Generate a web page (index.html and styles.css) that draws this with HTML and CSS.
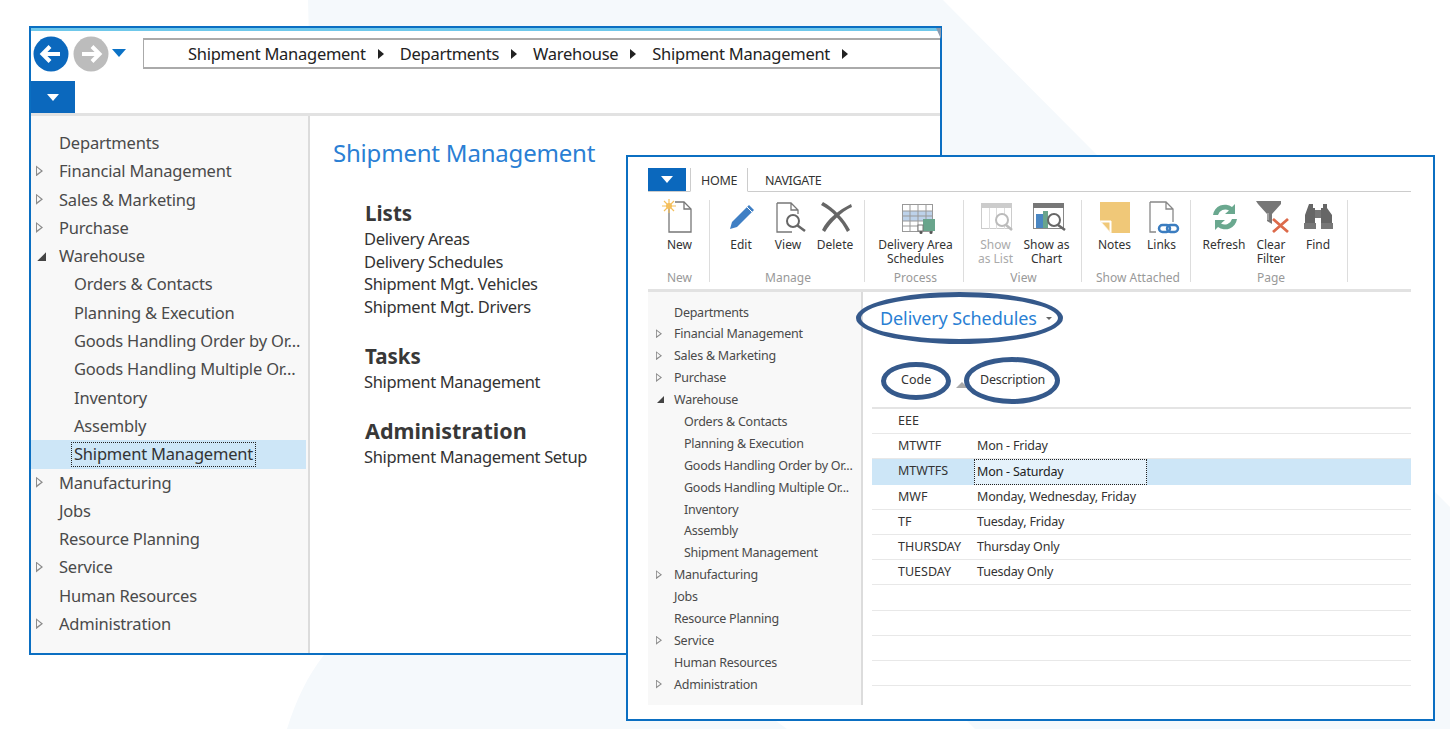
FILE: index.html

```html
<!DOCTYPE html>
<html lang="en">
  <head>
    <title>Shipment Management</title>
    <link rel="stylesheet" href="styles.css">
  </head>
  <body>
    <svg class="backdrop" width="1450" height="729" viewBox="0 0 1450 729">
      <path d="M308 0H943L1097 155V600L776 721L787 729H287C296 700 308 675 324 655Z" fill="#f5f9fc"/>
      <path d="M1430 487L1450 507V729H975L966 720V600Z" fill="#f5f9fc"/>
    </svg>

    <!-- Departments window -->
    <div class="window window-main">
      <div class="title-strip"><span class="corner"></span></div>
      <div class="nav-row">
        <svg class="nav-btn" width="36" height="36" viewBox="0 0 36 36">
          <circle cx="18" cy="18" r="17.5" fill="#0b68bd"/>
          <path d="M27 18H10M17 10.500L9.500 18L17 25.500" fill="none" stroke="#fff" stroke-width="4"/>
        </svg>
        <svg class="nav-btn" width="36" height="36" viewBox="0 0 36 36">
          <circle cx="18" cy="18" r="17.500" fill="#bcbcbc"/>
          <path d="M9 18H26M19 10.500L26.500 18L19 25.500" fill="none" stroke="#fff" stroke-width="4"/>
        </svg>
        <span class="nav-drop"></span>
        <div class="address">
          <span>Shipment Management</span><i></i>
          <span>Departments</span><i></i>
          <span>Warehouse</span><i></i>
          <span>Shipment Management</span><i></i>
        </div>
      </div>
      <div class="menu-row"><div class="menu-btn"><b></b></div></div>
      <div class="window-body">
        <ul class="tree tree-big">
          <li>Departments</li>
          <li class="closed">Financial Management</li>
          <li class="closed">Sales &amp; Marketing</li>
          <li class="closed">Purchase</li>
          <li class="open">Warehouse</li>
          <li class="child">Orders &amp; Contacts</li>
          <li class="child">Planning &amp; Execution</li>
          <li class="child">Goods Handling Order by Or...</li>
          <li class="child">Goods Handling Multiple Or...</li>
          <li class="child">Inventory</li>
          <li class="child">Assembly</li>
          <li class="child selected"><span>Shipment Management</span></li>
          <li class="closed">Manufacturing</li>
          <li>Jobs</li>
          <li>Resource Planning</li>
          <li class="closed">Service</li>
          <li>Human Resources</li>
          <li class="closed">Administration</li>
        </ul>
        <div class="main-content">
          <h1>Shipment Management</h1>
          <h2>Lists</h2>
          <p>Delivery Areas</p>
          <p>Delivery Schedules</p>
          <p>Shipment Mgt. Vehicles</p>
          <p>Shipment Mgt. Drivers</p>
          <h2 class="tasks">Tasks</h2>
          <p>Shipment Management</p>
          <h2 class="admin">Administration</h2>
          <p>Shipment Management Setup</p>
        </div>
      </div>
    </div>

    <!-- Delivery Schedules window -->
    <div class="window window-list">
      <div class="tabs">
        <div class="tab-menu"><b></b></div>
        <div class="tab active">HOME</div>
        <div class="tab">NAVIGATE</div>
      </div>

      <div class="ribbon">
        <div class="group g-new">
          <div class="items">
            <div class="item">
              <svg width="36" height="36" viewBox="0 0 36 36">
                <path d="M7 9V33H29V10L22 3H13" fill="#fff" stroke="#777" stroke-width="1.300"/>
                <path d="M22 3V10H29" fill="none" stroke="#777" stroke-width="1.300"/>
                <circle cx="7" cy="7" r="3" fill="#f4bf5c"/>
                <path d="M7 0V14M0 7H14M2 2L12 12M12 2L2 12" stroke="#f4bf5c" stroke-width="1.200"/>
              </svg>
              <span>New</span>
            </div>
          </div>
          <div class="group-name">New</div>
        </div>
        <div class="group g-manage">
          <div class="items">
            <div class="item">
              <svg width="36" height="36" viewBox="0 0 36 36">
                <path d="M7 30L9 23L26 6L31 11L14 28Z" fill="#3f7fc4"/>
                <path d="M24 8L29 13" stroke="#fff" stroke-width="1"/>
              </svg>
              <span>Edit</span>
            </div>
            <div class="item">
              <svg width="36" height="36" viewBox="0 0 36 36">
                <path d="M7 4H21L28 11V15M22 33H7V4M21 4V11H28" fill="none" stroke="#777" stroke-width="1.300"/>
                <circle cx="23" cy="22" r="6" fill="#fff" stroke="#666" stroke-width="2"/>
                <path d="M27.500 26.500L35 32" stroke="#666" stroke-width="2.500"/>
              </svg>
              <span>View</span>
            </div>
            <div class="item">
              <svg width="36" height="36" viewBox="0 0 36 36">
                <path d="M4 6C14 11 25 22 30 33L33 31C28 21 17 9 6 3Z" fill="#666"/>
                <path d="M34 5C22 11 10 20 5 31L8 33C14 23 24 13 35 8Z" fill="#666"/>
              </svg>
              <span>Delete</span>
            </div>
          </div>
          <div class="group-name">Manage</div>
        </div>
        <div class="group g-process">
          <div class="items">
            <div class="item item-wide">
              <svg width="36" height="36" viewBox="0 0 36 36">
                <rect x="4.500" y="5.500" width="30" height="27" fill="#fff" stroke="#999"/>
                <rect x="5" y="12" width="29" height="10" fill="#bdd2ea"/>
                <path d="M4 12H34M4 17H34M4 22H34M4 27H34M12 5V32M20 5V32M28 5V32" stroke="#999" stroke-width="1" fill="none"/>
                <rect x="25" y="20" width="12" height="12" fill="#69a58c"/>
                <rect x="20" y="26" width="5" height="6" fill="#fff" stroke="#777"/>
                <circle cx="23" cy="33.500" r="1.500" fill="#555"/>
                <circle cx="33" cy="33.500" r="1.500" fill="#555"/>
              </svg>
              <span>Delivery Area Schedules</span>
            </div>
          </div>
          <div class="group-name">Process</div>
        </div>
        <div class="group g-view">
          <div class="items">
            <div class="item disabled">
              <svg width="36" height="36" viewBox="0 0 36 36">
                <rect x="3.500" y="4.500" width="30" height="25" fill="#fff" stroke="#ccc"/>
                <rect x="3" y="4" width="31" height="5" fill="#ccc"/>
                <path d="M11.500 9V30M18.500 9V30M26.500 9V30" stroke="#ddd"/>
                <circle cx="24" cy="21" r="6" fill="#fff" stroke="#bbb" stroke-width="2"/>
                <path d="M28 26L34 31" stroke="#bbb" stroke-width="2.500"/>
              </svg>
              <span>Show as&nbsp;List</span>
            </div>
            <div class="item">
              <svg width="36" height="36" viewBox="0 0 36 36">
                <rect x="4.500" y="4.500" width="30" height="25" fill="#fff" stroke="#888"/>
                <rect x="4" y="4" width="31" height="5" fill="#777"/>
                <rect x="7" y="15" width="7" height="14" fill="#4a86c2"/>
                <rect x="14" y="12" width="5" height="17" fill="#69a58c"/>
                <circle cx="25" cy="21" r="6" fill="#fff" fill-opacity=".7" stroke="#666" stroke-width="2"/>
                <path d="M29 26L36 31" stroke="#666" stroke-width="2.500"/>
              </svg>
              <span>Show as Chart</span>
            </div>
          </div>
          <div class="group-name">View</div>
        </div>
        <div class="group g-attached">
          <div class="items">
            <div class="item">
              <svg width="36" height="36" viewBox="0 0 36 36">
                <path d="M3 3H33V34H14L3 22Z" fill="#f0c878"/>
                <path d="M3 22H14V34" fill="#fff" stroke="#fff" stroke-width="1"/>
                <path d="M5 23.500H12.500V32" fill="#f0c878"/>
              </svg>
              <span>Notes</span>
            </div>
            <div class="item">
              <svg width="36" height="36" viewBox="0 0 36 36">
                <path d="M6 3H22L29 10V23M12 33H6V3M22 3V10H29" fill="none" stroke="#888" stroke-width="1.300"/>
                <rect x="15" y="26" width="11" height="7" rx="3.500" fill="none" stroke="#3b7dc0" stroke-width="2.500"/>
                <rect x="23" y="26" width="11" height="7" rx="3.500" fill="none" stroke="#3b7dc0" stroke-width="2.500"/>
              </svg>
              <span>Links</span>
            </div>
          </div>
          <div class="group-name">Show Attached</div>
        </div>
        <div class="group g-page">
          <div class="items">
            <div class="item">
              <svg width="36" height="36" viewBox="0 0 36 36">
                <path d="M7 16A12 12 0 0 1 26 8L29 5V15H19L23 11.500A7.500 7.500 0 0 0 12 16Z" fill="#6aa88f"/>
                <path d="M31 20A12 12 0 0 1 12 28L9 31V21H19L15 24.500A7.500 7.500 0 0 0 26 20Z" fill="#6aa88f"/>
              </svg>
              <span>Refresh</span>
            </div>
            <div class="item">
              <svg width="36" height="36" viewBox="0 0 36 36">
                <path d="M3 2H28V5L19 15V25L14 22V15L5 5Z" fill="#777"/>
                <path d="M15 14V21" stroke="#ccc"/>
                <path d="M20 20L35 33M35 20L20 33" stroke="#dc6a4a" stroke-width="2.800"/>
              </svg>
              <span>Clear Filter</span>
            </div>
            <div class="item">
              <svg width="36" height="36" viewBox="0 0 36 36">
                <path d="M9 5H13V9H15V26H5V16ZM23 5H27V9L32 16V26H21V9H23Z" fill="#666"/>
                <rect x="15" y="11" width="6" height="8" fill="#777"/>
                <rect x="4" y="24" width="12" height="6" fill="#777"/>
                <rect x="21" y="24" width="12" height="6" fill="#777"/>
              </svg>
              <span>Find</span>
            </div>
          </div>
          <div class="group-name">Page</div>
        </div>
      </div>

      <div class="list-body">
        <ul class="tree tree-small">
          <li>Departments</li>
          <li class="closed">Financial Management</li>
          <li class="closed">Sales &amp; Marketing</li>
          <li class="closed">Purchase</li>
          <li class="open">Warehouse</li>
          <li class="child">Orders &amp; Contacts</li>
          <li class="child">Planning &amp; Execution</li>
          <li class="child">Goods Handling Order by Or...</li>
          <li class="child">Goods Handling Multiple Or...</li>
          <li class="child">Inventory</li>
          <li class="child">Assembly</li>
          <li class="child">Shipment Management</li>
          <li class="closed">Manufacturing</li>
          <li>Jobs</li>
          <li>Resource Planning</li>
          <li class="closed">Service</li>
          <li>Human Resources</li>
          <li class="closed">Administration</li>
        </ul>
        <div class="list-pane">
          <div class="list-title">Delivery Schedules <b></b></div>
          <div class="list-head">
            <span class="col-code">Code</span>
            <span class="col-desc">Description</span>
            <i class="sort"></i>
          </div>
          <div class="row"><span class="col-code">EEE</span><span class="col-desc"></span></div>
          <div class="row"><span class="col-code">MTWTF</span><span class="col-desc">Mon - Friday</span></div>
          <div class="row row-on"><span class="col-code">MTWTFS</span><span class="col-desc">Mon - Saturday</span></div>
          <div class="row"><span class="col-code">MWF</span><span class="col-desc">Monday, Wednesday, Friday</span></div>
          <div class="row"><span class="col-code">TF</span><span class="col-desc">Tuesday, Friday</span></div>
          <div class="row"><span class="col-code">THURSDAY</span><span class="col-desc">Thursday Only</span></div>
          <div class="row"><span class="col-code">TUESDAY</span><span class="col-desc">Tuesday Only</span></div>
          <div class="row"></div>
          <div class="row"></div>
          <div class="row"></div>
          <div class="row"></div>
        </div>
      </div>
    </div>

    <!-- hand drawn marks over the list -->
    <div class="oval oval-title"></div>
    <div class="oval oval-code"></div>
    <div class="oval oval-desc"></div>
  </body>
</html>
```

FILE: styles.css

```css
* {
  box-sizing: border-box;
}

body {
  margin: 0;
  width: 1450px;
  height: 729px;
  overflow: hidden;
  position: relative;
  background-color: #fff;
  font-family: "Noto Sans", "Open Sans", sans-serif;
  color: #444;
}

ul {
  list-style: none;
  margin: 0;
  padding: 0;
}

.backdrop {
  position: absolute;
  left: 0;
  top: 0;
}

.window {
  position: absolute;
  background-color: #fff;
  border: 2px solid #0b6fc2;
}

.window-main {
  left: 29px;
  top: 26px;
  width: 913px;
  height: 629px;
  display: flex;
  flex-direction: column;
}

.window-list {
  left: 626px;
  top: 155px;
  width: 809px;
  height: 566px;
  padding: 11px 22px 14px 20px;
  display: flex;
  flex-direction: column;
}

.title-strip {
  height: 3px;
  background-color: #6fc8ea;
  position: relative;
}

.corner {
  position: absolute;
  right: -1px;
  top: 0;
  width: 5px;
  height: 11px;
  background-color: #8a9bb0;
  clip-path: polygon(0 0, 100% 0, 100% 100%);
}

.nav-row {
  height: 50px;
  display: flex;
  align-items: center;
  padding: 0 0 4px 2px;
  gap: 4px;
}

.nav-btn {
  flex: none;
  margin-top: -1px;
}

.nav-drop {
  width: 0;
  height: 0;
  margin-left: -1px;
  border-left: 7px solid transparent;
  border-right: 7px solid transparent;
  border-top: 8px solid #0b72c6;
  margin-top: -3px;
}

.address {
  flex: 1;
  height: 31px;
  margin-left: 13px;
  margin-top: -1px;
  padding-left: 44px;
  display: flex;
  align-items: center;
  gap: 12px;
  border: 2px solid #aaa;
  border-right: 0;
  border-left-width: 1px;
  font-size: 16.500px;
  letter-spacing: -0.27px;
  color: #222;
}

.address i {
  width: 0;
  height: 0;
  border-top: 5px solid transparent;
  border-bottom: 5px solid transparent;
  border-left: 6px solid #222;
  margin-right: 4px;
}

.menu-row {
  height: 35px;
  border-bottom: 3px solid #e2e2e2;
  flex: none;
}

.menu-btn {
  width: 44px;
  height: 32px;
  background-color: #0b68bd;
  display: flex;
  align-items: center;
  justify-content: center;
}

.menu-btn b,
.tab-menu b {
  width: 0;
  height: 0;
  border-left: 6px solid transparent;
  border-right: 6px solid transparent;
  border-top: 7px solid #fff;
}

.window-body {
  flex: 1;
  display: flex;
  min-height: 0;
}

.tree {
  background-color: #f8f8f8;
  flex: none;
  color: #4a4a4a;
}

.tree li {
  position: relative;
  white-space: nowrap;
}

.tree .closed::before {
  content: "";
  position: absolute;
  top: 50%;
  width: 7px;
  height: 11px;
  margin-top: -6px;
  background-color: #8c8c8c;
  clip-path: polygon(0 0, 100% 50%, 0 100%, 0 82%, 72% 50%, 14% 18%, 14% 82%, 0 82%);
}

.tree .open::before {
  content: "";
  position: absolute;
  top: 50%;
  width: 9px;
  height: 9px;
  margin-top: -4px;
  background-color: #444;
  clip-path: polygon(100% 0, 100% 100%, 0 100%);
}

.tree-big {
  width: 279px;
  padding-top: 13px;
  border-right: 2px solid #dcdcdc;
  font-size: 16.500px;
  letter-spacing: -0.2px;
}

.tree-big li {
  height: 28.300px;
  line-height: 28px;
  padding-left: 28px;
}

.tree-big .closed::before {
  left: 5px;
}

.tree-big .open::before {
  left: 6px;
}

.tree-big .child {
  padding-left: 43px;
}

.tree-big .selected {
  background-color: #cde6f7;
  margin-right: 2px;
  color: #333;
}

.selected span {
  display: inline-block;
  height: 25px;
  line-height: 22px;
  margin-left: -3px;
  padding: 0 2px;
  border: 1px dotted #222;
  vertical-align: top;
  margin-top: 2px;
}

.main-content {
  flex: 1;
  padding: 16px 0 0 23px;
  color: #333;
}

.main-content h1 {
  margin: 0 0 26px;
  font-size: 24px;
  font-weight: 400;
  letter-spacing: -0.2px;
  line-height: 42px;
  color: #2a7fd4;
}

.main-content h2 {
  margin: 0 0 2px;
  padding-left: 32px;
  font-size: 20.500px;
  font-weight: 700;
  line-height: 26px;
  color: #383838;
}

.main-content p {
  margin: 0;
  padding-left: 31px;
  font-size: 16.500px;
  letter-spacing: -0.35px;
  line-height: 22.700px;
  white-space: nowrap;
}

.main-content .tasks {
  margin-top: 24px;
}

.main-content .admin {
  margin-top: 24px;
  font-size: 21.500px;
}

.tabs {
  height: 24px;
  display: flex;
  flex: none;
  font-size: 12px;
  color: #333;
  border-bottom: 1px solid #ccc;
}

.tab-menu {
  width: 38px;
  height: 23px;
  margin-right: 4px;
  background-color: #0b68bd;
  display: flex;
  align-items: center;
  justify-content: center;
}

.tab {
  padding: 0 10px;
  line-height: 26px;
  height: 24px;
  font-size: 12.500px;
  letter-spacing: -0.3px;
}

.tab.active {
  width: 58px;
  padding: 0 10px;
  border: 1px solid #ccc;
  border-top: 0;
  border-bottom: 1px solid #fff;
  margin-right: 7px;
}

.ribbon {
  height: 100px;
  flex: none;
  display: flex;
  border-bottom: 3px solid #e2e2e2;
  font-size: 12px;
  padding-top: 8px;
}

.group {
  display: flex;
  flex-direction: column;
  align-items: center;
  border-right: 1px solid #ddd;
  height: 82px;
  padding-left: 2px;
}

.g-new { width: 62px; }
.g-manage { width: 155px; }
.g-process { width: 99px; padding-left: 3px; }
.g-view { width: 118px; padding-left: 2px; }
.g-attached { width: 109px; padding-left: 4px; }
.g-page { width: 157px; padding-left: 4px; }

.items {
  height: 70px;
  flex: none;
  display: flex;
  justify-content: center;
}

.item {
  width: 47px;
  display: flex;
  flex-direction: column;
  align-items: center;
  text-align: center;
  line-height: 14px;
  color: #333;
}

.item svg {
  overflow: visible;
  flex: none;
  margin-top: -1px;
  margin-bottom: 3px;
}

.item-wide {
  width: 86px;
}

.g-view .items {
  margin-right: 5px;
}

.g-view .item {
  width: 51px;
}

.disabled {
  color: #aaa;
}

.group-name {
  font-size: 12px;
  line-height: 16px;
  color: #999;
}

.list-body {
  flex: 1;
  display: flex;
  min-height: 0;
}

.tree-small {
  width: 215px;
  padding-top: 9.500px;
  border-right: 2px solid #dcdcdc;
  font-size: 12.500px;
  letter-spacing: -0.25px;
}

.tree-small li {
  height: 21.900px;
  line-height: 22px;
  padding-left: 26px;
}

.tree-small .closed::before {
  left: 8px;
  width: 6px;
  height: 9px;
  margin-top: -5px;
}

.tree-small .open::before {
  left: 9px;
  width: 7px;
  height: 7px;
}

.tree-small .child {
  padding-left: 36px;
}

.list-pane {
  flex: 1;
  padding-left: 9px;
  color: #333;
  font-size: 12.500px;
}

.list-title {
  height: 50px;
  padding: 1px 0 0 8px;
  font-size: 18px;
  line-height: 30px;
  letter-spacing: -0.1px;
  color: #2a7fd4;
  display: flex;
  align-items: center;
}

.list-title b {
  width: 0;
  height: 0;
  margin: 2px 0 0 9px;
  border-left: 3px solid transparent;
  border-right: 3px solid transparent;
  border-top: 3px solid #666;
}

.list-head {
  height: 67px;
  display: flex;
  position: relative;
  padding-top: 28px;
  line-height: 20px;
  border-bottom: 2px solid #e4e4e4;
}

.sort {
  position: absolute;
  left: 84px;
  top: 40px;
  width: 0;
  height: 0;
  border-left: 6px solid transparent;
  border-right: 6px solid transparent;
  border-bottom: 6px solid #aaa;
}

.col-code {
  width: 102px;
  padding-left: 26px;
  flex: none;
}

.col-desc {
  width: 173px;
  padding-left: 3px;
  flex: none;
  letter-spacing: -0.2px;
}

.list-head .col-code {
  padding-left: 29px;
}

.list-head .col-desc {
  padding-left: 6px;
}

.row {
  height: 25.200px;
  line-height: 24px;
  display: flex;
  border-bottom: 1px solid #e8e8e8;
}

.row-on {
  background-color: #cde6f7;
  border-bottom: 0;
  line-height: 23px;
}

.row-on .col-desc {
  background-color: #e5f2fb;
  border: 1px dotted #222;
  padding-left: 2px;
  color: #222;
}

.oval {
  position: absolute;
  border: 5px solid #35598b;
  border-radius: 50%;
}

.oval-title {
  left: 856px;
  top: 292px;
  width: 207px;
  height: 52px;
}

.oval-code {
  left: 881px;
  top: 362px;
  width: 70px;
  height: 38px;
}

.oval-desc {
  left: 964px;
  top: 357px;
  width: 96px;
  height: 47px;
}
```
